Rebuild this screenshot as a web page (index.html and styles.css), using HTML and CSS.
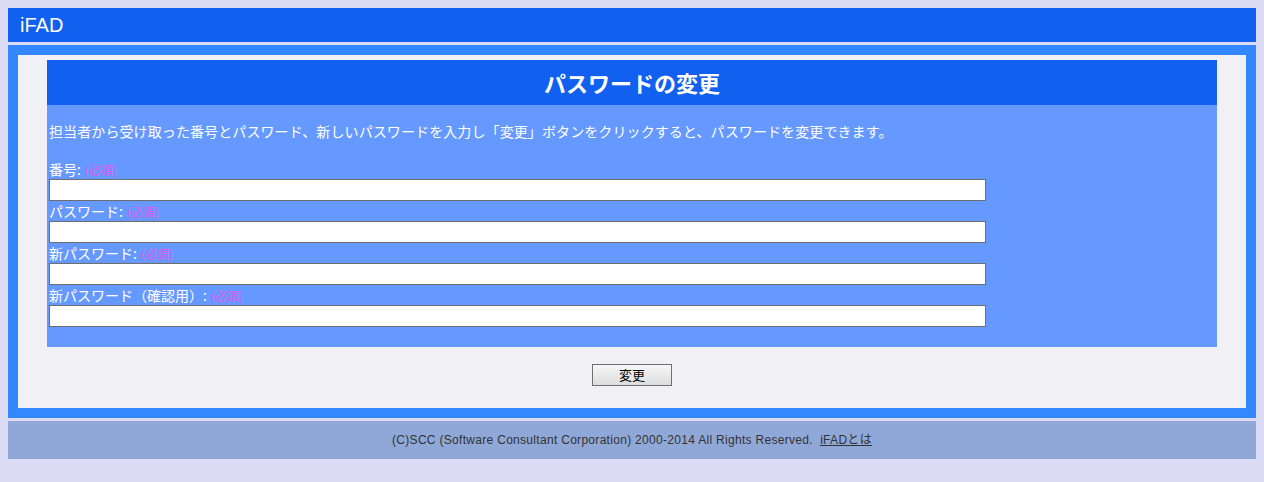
FILE: index.html
```html
<!DOCTYPE html>
<html lang="ja">
<head>
<meta charset="utf-8">
<title>パスワードの変更</title>
<link rel="stylesheet" href="styles.css">
</head>
<body>
<header class="top">iFAD</header>
<main class="frame">
  <div class="inner">
    <h1 class="title">パスワードの変更</h1>
    <form class="form">
      <p class="desc">担当者から受け取った番号とパスワード、新しいパスワードを入力し「変更」ボタンをクリックすると、パスワードを変更できます。</p>
      <label class="label">番号:<span class="req">(必須)</span></label>
      <input class="field" type="text">
      <label class="label">パスワード:<span class="req">(必須)</span></label>
      <input class="field" type="password">
      <label class="label">新パスワード:<span class="req">(必須)</span></label>
      <input class="field" type="password">
      <label class="label">新パスワード（確認用）:<span class="req">(必須)</span></label>
      <input class="field" type="password">
    </form>
    <div class="actions"><button class="btn" type="button">変更</button></div>
  </div>
</main>
<footer class="foot">(C)SCC (Software Consultant Corporation) 2000-2014 All Rights Reserved. &nbsp;<a class="about" href="#">iFADとは</a></footer>
</body>
</html>
```
FILE: styles.css
```css
html, body { margin: 0; padding: 0; }
body {
  margin: 8px;
  background: #dddcf7;
  font-family: "Noto Sans CJK JP", "Liberation Sans", sans-serif;
  color: #fff;
}
.top {
  height: 34px;
  background: #1160f0;
  color: #fff;
  font-family: "Liberation Sans", "Noto Sans CJK JP", sans-serif;
  font-size: 20px;
  line-height: 34px;
  padding-left: 12px;
}
.frame {
  display: block;
  margin-top: 3px;
  border: 10px solid #3388ff;
  background: #f0f0f5;
  height: 353px;
}
.inner {
  width: 1170px;
  margin: 0 auto;
  padding-top: 5px;
}
.title {
  margin: 0;
  height: 45px;
  background: #1160f0;
  color: #fff;
  font-size: 22px;
  font-weight: bold;
  line-height: 45px;
  text-align: center;
}
.form {
  display: flex;
  flex-direction: column;
  align-items: flex-start;
  background: #6699ff;
  padding: 16px 2px 20px;
  height: 206px;
}
.desc {
  margin: 0 0 18px;
  font-size: 14px;
  line-height: 20px;
  height: 20px;
  white-space: nowrap;
  letter-spacing: 0.1px;
}
.label {
  font-size: 14px;
  line-height: 20px;
  height: 20px;
}
.req {
  color: #e855e8;
  font-size: 12px;
  margin-left: 4px;
}
.field {
  box-sizing: border-box;
  width: 937px;
  height: 22px;
  margin: 0;
  border: 1px solid #6e6e6e;
  background: #fff;
  padding: 1px 3px;
}
.actions {
  display: flex;
  justify-content: center;
  margin-top: 17px;
}
.btn {
  box-sizing: border-box;
  width: 80px;
  height: 22px;
  border: 1px solid #707070;
  background: linear-gradient(#f6f6f6, #dddddd);
  color: #000;
  font-family: "Noto Sans CJK JP", sans-serif;
  font-size: 13px;
  line-height: 18px;
  padding: 0;
}
.foot {
  margin-top: 3px;
  height: 38px;
  background: #90a8d8;
  color: #333;
  font-family: "Liberation Sans", "Noto Sans CJK JP", sans-serif;
  font-size: 12px;
  letter-spacing: 0.3px;
  line-height: 38px;
  text-align: center;
}
.about { color: #333; }
```
